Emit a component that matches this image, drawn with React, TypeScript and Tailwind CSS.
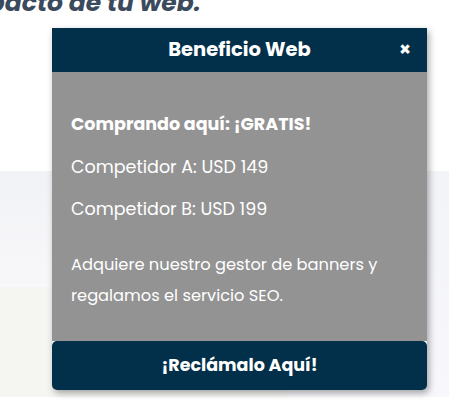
export default function App() {
  return (
    <div
      className="relative w-[449px] h-[410px] overflow-hidden bg-white"
      style={{ fontFamily: '"Poppins", "Open Sans", sans-serif' }}
    >
      {/* ── Page behind the popup ─────────────────────────────────────── */}
      <div className="h-[184px] bg-white">
        <h2 className="-mt-[13px] -ml-[46px] text-[25px] leading-[32px] font-bold italic text-[#3b4a5c] whitespace-nowrap">
          impacto de tu web.
        </h2>
      </div>
      <div className="grid grid-cols-[287px_1fr] h-[226px]">
        <div className="flex flex-col">
          <div className="h-[116px] bg-gradient-to-b from-[#f1f2f5] to-[#f8f8fb]" />
          <div className="flex-1 bg-[#f5f6f2]" />
        </div>
        <div className="bg-gradient-to-b from-[#f3f4f7] to-[#f7f7fc]" />
      </div>

      {/* ── Popup ─────────────────────────────────────────────────────── */}
      <div className="absolute left-[52px] top-[28px] w-[375px] flex flex-col shadow-[2px_3px_7px_rgba(0,0,0,0.35)] rounded-b-[5px]">
        <div className="relative h-[44px] bg-[#022f49] flex items-center justify-center">
          <span className="text-white text-[19.5px] font-bold">Beneficio Web</span>
          <button className="absolute right-[16px] top-[12px] text-white text-[19px] leading-[19px] font-bold">
            ×
          </button>
        </div>
        <div className="bg-[#939393] pt-[37px] pb-[30px] px-[19px] text-white text-[17.5px]">
          <p className="leading-[30px] font-bold">Comprando aquí: ¡GRATIS!</p>
          <p className="leading-[30px] mt-[13px]">Competidor A: USD 149</p>
          <p className="leading-[30px] mt-[12px]">Competidor B: USD 199</p>
          <p className="leading-[31px] mt-[25px] text-[16.25px]">
            Adquiere nuestro gestor de banners y
            <br />
            regalamos el servicio SEO.
          </p>
        </div>
        <button className="h-[49px] bg-[#022f49] rounded-[5px] text-white text-[17.5px] font-bold">
          ¡Reclámalo Aquí!
        </button>
      </div>
    </div>
  );
}
